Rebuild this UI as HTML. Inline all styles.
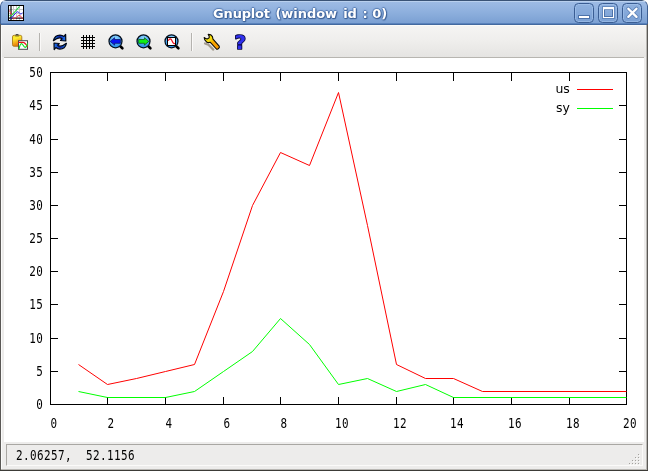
<!DOCTYPE html>
<html><head><meta charset="utf-8"><title>Gnuplot (window id : 0)</title>
<style>
html,body{margin:0;padding:0;background:#fff;}
body{width:648px;height:471px;position:relative;overflow:hidden;font-family:"DejaVu Sans","Liberation Sans",sans-serif;}
#win{position:absolute;left:0;top:0;width:648px;height:471px;box-sizing:border-box;background:#edeceb;border-radius:6px 6px 0 0;overflow:hidden;}
#frameL{position:absolute;left:0;top:24px;width:1px;height:447px;background:#5a5855;}
#frameL2{position:absolute;left:1px;top:25px;width:1px;height:444px;background:#fbfbfa;}
#frameR{position:absolute;left:647px;top:24px;width:1px;height:447px;background:#5a5855;}
#frameR2{position:absolute;left:646px;top:25px;width:1px;height:445px;background:#b9b7b3;}
#frameB{position:absolute;left:0;top:470px;width:648px;height:1px;background:#3c3b37;}
#frameB2{position:absolute;left:1px;top:469px;width:646px;height:1px;background:#b9b7b3;}
#title{position:absolute;left:0;top:0;width:648px;height:25px;box-sizing:border-box;border:1px solid #3d5f92;border-top-color:#3a5376;border-bottom:1px solid #43699f;border-radius:6px 6px 0 0;background:linear-gradient(#9fbce5 0%,#8dafdd 50%,#7ba0d3 95.600%,#5982bc 95.700%,#5982bc 100%);}
#title .hl{position:absolute;left:1px;right:1px;top:0;height:1px;background:#b9d0ee;border-radius:5px 5px 0 0;}
#ttext{position:absolute;left:0;top:4.500px;width:599px;height:16px;color:#fff;font-weight:bold;font-size:13px;letter-spacing:-0.040px;line-height:16px;text-shadow:0 1px 1px #3f6398,1px 1px 1px #3f6398,1px 0 1px #4f74aa,-1px 0 1px #5a7fb5,0 -1px 1px #5a7fb5;white-space:pre;will-change:transform;}
#ttext span{position:absolute;top:0;}
.wb{position:absolute;top:2px;width:20px;height:20px;box-sizing:border-box;border:1px solid #3a5d93;border-radius:4.500px;background:linear-gradient(#8fb1df,#7aa0d4);box-shadow:inset 0 0 0 1px rgba(170,200,238,0.550);}
.wb svg{position:absolute;left:-1px;top:-1px;}
#toolbar{position:absolute;left:2px;top:25px;width:644px;height:32px;background:linear-gradient(#fbfbfa 0,#fbfbfa 1px,#f5f4f3 1px,#efeeec 50%,#e5e4e2 100%);}
#tbline{position:absolute;left:4px;top:57px;width:640px;height:1px;background:#b7b5b0;}
.sep{position:absolute;top:8px;width:1px;height:18px;background:#b5b3af;box-shadow:1px 0 0 #faf9f8;}
.ic{position:absolute;top:9px;width:16px;height:16px;overflow:visible;}
#plotbg{position:absolute;left:4px;top:58px;width:640px;height:384px;background:#fff;}
.plot{position:absolute;left:4px;top:58px;will-change:transform;}
#status{position:absolute;left:6px;top:444px;width:637px;height:22px;box-sizing:border-box;border:1px solid;border-color:#a9a7a3 #fbfaf9 #fbfaf9 #a9a7a3;}
#stext{position:absolute;left:16.400px;top:448px;font-family:"DejaVu Sans Mono","Liberation Mono",monospace;font-size:13.700px;letter-spacing:0.500px;line-height:14px;color:#000;white-space:pre;transform:scaleX(0.800);transform-origin:0 0;}
#grip{position:absolute;left:626px;top:451px;}
</style></head><body>
<div id="win">
<div id="toolbar">
<svg class="ic" style="left:10px" viewBox="0 0 16 16"><defs><linearGradient id="cb" x1="0" y1="0" x2="0.300" y2="1"><stop offset="0" stop-color="#f4e62a"/><stop offset="0.350" stop-color="#fdec30"/><stop offset="1" stop-color="#e87408"/></linearGradient></defs>
<rect x="0.500" y="1.300" width="9.300" height="11" rx="1.600" fill="url(#cb)" stroke="#a87a1c" stroke-width="0.900"/><rect x="3.600" y="0" width="3" height="1.600" rx="0.700" fill="#4a4a48"/><rect x="3" y="1.200" width="4.200" height="1.200" rx="0.400" fill="#8a7a30"/>
<rect x="6.500" y="6.700" width="9" height="8.600" fill="#fff" stroke="#4a4a4a" stroke-width="1"/><path d="M6.500 8.300H11C13 8.300 14.200 10.500 15.600 12.800" fill="none" stroke="#f0101a" stroke-width="1.300"/><path d="M7 14.900C7.600 12 8 10.200 9.200 9.700S11.200 12 12.600 13.100 15 11.500 15.600 9.300" fill="none" stroke="#18e028" stroke-width="1.200"/></svg>
<div class="sep" style="left:37px"></div>
<svg class="ic" style="left:49px" viewBox="0 0 16 16"><defs><linearGradient id="rf" x1="0" y1="0" x2="1" y2="0"><stop offset="0" stop-color="#1c8cf0"/><stop offset="0.500" stop-color="#0a1fa8"/><stop offset="1" stop-color="#1f7df2"/></linearGradient></defs>
<path d="M2.400 6.700C3.200 3 6 1 9 1C10.800 1 12 1.600 13 2.400L14.600 .400 14.800 7 9.500 6.500 11 4.800C10.400 4.200 9.600 3.800 8.600 3.800C6.500 3.800 4.500 5 2.400 6.700Z" fill="url(#rf)" stroke="#020818" stroke-width="1.250" stroke-linejoin="round"/>
<g transform="rotate(180 8.900 8)"><path d="M2.400 6.700C3.200 3 6 1 9 1C10.800 1 12 1.600 13 2.400L14.600 .400 14.800 7 9.500 6.500 11 4.800C10.400 4.200 9.600 3.800 8.600 3.800C6.500 3.800 4.500 5 2.400 6.700Z" fill="url(#rf)" stroke="#020818" stroke-width="1.250" stroke-linejoin="round"/></g></svg>
<svg class="ic" style="left:78px" viewBox="0 0 16 16" shape-rendering="crispEdges"><path d="M3.500 1v14M6.500 1v14M9.500 1v14M12.500 1v14M1 3.500h14M1 6.500h14M1 9.500h14M1 12.500h14" stroke="#000" stroke-width="1.300" fill="none"/></svg>
<svg class="ic" style="left:106px" viewBox="0 0 16 16"><defs><radialGradient id="zg" cx="0.5" cy="0.25" r="0.8"><stop offset="0" stop-color="#8fd4ff"/><stop offset="1" stop-color="#1a86e6"/></radialGradient></defs>
<path d="M12.300 12.300L14.400 14.300" stroke="#000" stroke-width="2.600" stroke-linecap="round"/><circle cx="7.500" cy="7.300" r="6.500" fill="url(#zg)" stroke="#06101e" stroke-width="1.250"/><path d="M2.200 7.400L6.600 3.700V5.500H12.400V9.300H6.600V11.100Z" fill="#0a14f0" stroke="#061060" stroke-width="0.700"/></svg>
<svg class="ic" style="left:134px" viewBox="0 0 16 16"><path d="M12.300 12.300L14.400 14.300" stroke="#000" stroke-width="2.600" stroke-linecap="round"/><circle cx="7.500" cy="7.300" r="6.500" fill="url(#zg)" stroke="#06101e" stroke-width="1.250"/><path d="M12.800 7.400L8.400 3.700V5.500H2.600V9.300H8.400V11.100Z" fill="#10ee18" stroke="#06500a" stroke-width="0.700"/></svg>
<svg class="ic" style="left:162px" viewBox="0 0 16 16"><path d="M12.300 12.300L14.400 14.300" stroke="#000" stroke-width="2.600" stroke-linecap="round"/><circle cx="7.500" cy="7.300" r="6.500" fill="url(#zg)" stroke="#06101e" stroke-width="1.250"/><rect x="3.500" y="3.500" width="8" height="8" fill="#fff" stroke="#000" stroke-width="1"/><path d="M4.300 6.800c1-2.600 2.800-2.600 3.700 0s1.700 3 3 3" fill="none" stroke="#f01020" stroke-width="1.100"/></svg>
<div class="sep" style="left:189px"></div>
<svg class="ic" style="left:201px" viewBox="0 0 16 16"><defs><linearGradient id="wr" gradientUnits="userSpaceOnUse" x1="2" y1="3" x2="15" y2="14"><stop offset="0" stop-color="#f0f20e"/><stop offset="0.380" stop-color="#f7d408"/><stop offset="0.550" stop-color="#f9a800"/><stop offset="1" stop-color="#f89600"/></linearGradient><filter id="bl" x="-50%" y="-50%" width="200%" height="200%"><feGaussianBlur stdDeviation="0.700"/></filter></defs>
<path d="M2 9.400L5.400 10.800 10.300 15.600" stroke="#857a68" stroke-width="2.200" fill="none" opacity="0.700" stroke-linecap="round" filter="url(#bl)"/>
<path d="M5.200 .400L8 .900C9.200 1.600 9.900 2.800 10 5.200L16.200 12.200C17 13.600 14.900 15.900 13.400 15L7.100 8.200C5.800 8.800 4.800 8.700 4 8.300L1.800 5.800 1.200 3.600 2.600 4.400C3.400 4.900 4.200 4.900 4.700 4.700C5.600 4.400 6.100 4 6.200 3.600C6.300 2.800 6.200 2.200 5.900 1.600Z" fill="url(#wr)" stroke="#0c0a04" stroke-width="1.100" stroke-linejoin="round"/></svg>
<svg class="ic" style="left:229px;will-change:transform" viewBox="0 0 16 16"><text x="9.200" y="15.200" text-anchor="middle" font-family="'DejaVu Sans','Liberation Sans',sans-serif" font-weight="bold" font-size="20" fill="#3030ee" stroke="#06063c" stroke-width="1.700" stroke-linejoin="round" paint-order="stroke">?</text></svg>
</div>
<div id="tbline"></div>
<div id="plotbg"></div>
<svg class="plot" width="636" height="384" viewBox="4 58 636 384">
<g fill="none" stroke="#000" stroke-width="1" shape-rendering="crispEdges"><rect x="50.5" y="72.5" width="576.0" height="332.0"/><path d="M107.5 404.5v-8M107.5 72.5v8M165.5 404.5v-8M165.5 72.5v8M223.5 404.5v-8M223.5 72.5v8M280.5 404.5v-8M280.5 72.5v8M338.5 404.5v-8M338.5 72.5v8M396.5 404.5v-8M396.5 72.5v8M453.5 404.5v-8M453.5 72.5v8M511.5 404.5v-8M511.5 72.5v8M569.5 404.5v-8M569.5 72.5v8M50.5 371.5h7M626.5 371.5h-8M50.5 338.5h7M626.5 338.5h-8M50.5 304.5h7M626.5 304.5h-8M50.5 271.5h7M626.5 271.5h-8M50.5 238.5h7M626.5 238.5h-8M50.5 205.5h7M626.5 205.5h-8M50.5 172.5h7M626.5 172.5h-8M50.5 139.5h7M626.5 139.5h-8M50.5 105.5h7M626.5 105.5h-8"/></g>
<g font-family="'DejaVu Sans Mono','Liberation Mono',monospace" font-size="13.2" letter-spacing="0.5" fill="#000"><text transform="translate(54.0,428) scale(0.829,1)" text-anchor="middle">0</text><text transform="translate(111.0,428) scale(0.829,1)" text-anchor="middle">2</text><text transform="translate(169.0,428) scale(0.829,1)" text-anchor="middle">4</text><text transform="translate(227.0,428) scale(0.829,1)" text-anchor="middle">6</text><text transform="translate(284.0,428) scale(0.829,1)" text-anchor="middle">8</text><text transform="translate(342.0,428) scale(0.829,1)" text-anchor="middle">10</text><text transform="translate(400.0,428) scale(0.829,1)" text-anchor="middle">12</text><text transform="translate(457.0,428) scale(0.829,1)" text-anchor="middle">14</text><text transform="translate(515.0,428) scale(0.829,1)" text-anchor="middle">16</text><text transform="translate(573.0,428) scale(0.829,1)" text-anchor="middle">18</text><text transform="translate(630.0,428) scale(0.829,1)" text-anchor="middle">20</text><text transform="translate(43.2,409.0) scale(0.829,1)" text-anchor="end">0</text><text transform="translate(43.2,376.0) scale(0.829,1)" text-anchor="end">5</text><text transform="translate(43.2,343.0) scale(0.829,1)" text-anchor="end">10</text><text transform="translate(43.2,309.0) scale(0.829,1)" text-anchor="end">15</text><text transform="translate(43.2,276.0) scale(0.829,1)" text-anchor="end">20</text><text transform="translate(43.2,243.0) scale(0.829,1)" text-anchor="end">25</text><text transform="translate(43.2,210.0) scale(0.829,1)" text-anchor="end">30</text><text transform="translate(43.2,177.0) scale(0.829,1)" text-anchor="end">35</text><text transform="translate(43.2,144.0) scale(0.829,1)" text-anchor="end">40</text><text transform="translate(43.2,110.0) scale(0.829,1)" text-anchor="end">45</text><text transform="translate(43.2,77.0) scale(0.829,1)" text-anchor="end">50</text></g>
<g font-family="'DejaVu Sans','Liberation Sans',sans-serif" font-size="12.5" fill="#000" text-anchor="end"><text transform="translate(569.8,93) scale(0.999,1)">us</text><text transform="translate(569.8,112) scale(0.999,1)">sy</text></g>
<g fill="none" stroke-width="1" stroke-linejoin="miter"><polyline stroke="#ff0000" points="78.5,364.5 107.5,384.5 136.5,378.5 165.5,371.5 194.5,364.5 223.5,291.5 252.5,205.5 280.5,152.5 309.5,165.5 338.5,92.5 367.5,225.5 396.5,364.5 425.5,378.5 453.5,378.5 482.5,391.5 626.5,391.5"/><polyline stroke="#00ff00" points="78.5,391.5 107.5,397.5 165.5,397.5 194.5,391.5 223.5,371.5 252.5,351.5 280.5,318.5 309.5,344.5 338.5,384.5 367.5,378.5 396.5,391.5 425.5,384.5 453.5,397.5 626.5,397.5"/>
<path stroke="#ff0000" d="M577 89.5H613"/><path stroke="#00ff00" d="M577 108.5H613"/></g>
</svg>
<div id="status"></div>
<div id="stext">2.06257,  52.1156</div>
<svg id="grip" width="16" height="16" viewBox="0 0 16 16" shape-rendering="crispEdges"><g fill="#fbfbfa"><rect x="13" y="13" width="1" height="1"/><rect x="13" y="10" width="1" height="1"/><rect x="13" y="7" width="1" height="1"/><rect x="13" y="4" width="1" height="1"/><rect x="10" y="13" width="1" height="1"/><rect x="10" y="10" width="1" height="1"/><rect x="10" y="7" width="1" height="1"/><rect x="7" y="13" width="1" height="1"/><rect x="7" y="10" width="1" height="1"/><rect x="4" y="13" width="1" height="1"/></g><g fill="#a3a19d"><rect x="12" y="12" width="1" height="1"/><rect x="12" y="9" width="1" height="1"/><rect x="12" y="6" width="1" height="1"/><rect x="12" y="3" width="1" height="1"/><rect x="9" y="12" width="1" height="1"/><rect x="9" y="9" width="1" height="1"/><rect x="9" y="6" width="1" height="1"/><rect x="6" y="12" width="1" height="1"/><rect x="6" y="9" width="1" height="1"/><rect x="3" y="12" width="1" height="1"/></g></svg>
<div id="title"><div class="hl"></div>
<svg style="position:absolute;left:7px;top:4px" width="16" height="16" viewBox="0 0 16 16"><rect x="0.500" y="0.500" width="15" height="15" fill="#fff" stroke="#000" stroke-width="1"/><path d="M5.500 1v14M8.500 1v14M11.500 1v14M1 4.500h14M1 8.500h14M1 12.500h14" stroke="#c8c8c8" stroke-width="1" fill="none"/><path d="M3 1v14" stroke="#000" stroke-width="1.200"/><path d="M1 13.200h14" stroke="#000" stroke-width="1"/><path d="M1.500 10.500L4 10 11.500 1.500" fill="none" stroke="#18d838" stroke-width="1.100"/><path d="M1.500 5.500L3.500 10" fill="none" stroke="#f04050" stroke-width="1"/><path d="M2.500 14L8.500 7.200C9.500 6.200 10.500 7 11.500 8.200S13.500 9 14.500 7.800" fill="none" stroke="#2828f0" stroke-width="1"/><path d="M4.500 12.800C6 14.200 7.500 13.600 8.800 12S11.800 9.800 12.800 11.200 14 13.600 14.500 14" fill="none" stroke="#f03040" stroke-width="1"/></svg>
<div id="ttext"><span style="left:212.1px;letter-spacing:-0.190px">Gnuplot </span><span style="left:274.4px">(window </span><span style="left:342.2px">id </span><span style="left:361.5px">: </span><span style="left:371.2px">0)</span></div>
<div class="wb" style="left:573px"><svg width="20" height="20" viewBox="0 0 20 20"><rect x="4.500" y="12.500" width="11" height="3" fill="#fff" stroke="#4d73aa" stroke-width="1"/></svg></div>
<div class="wb" style="left:597px"><svg width="20" height="20" viewBox="0 0 20 20"><rect x="4.500" y="3.500" width="12" height="12" fill="none" stroke="#4d73aa" stroke-width="1" opacity="0.600"/><rect x="6.500" y="6.500" width="8" height="7" fill="none" stroke="#4d73aa" stroke-width="1"/><rect x="5.500" y="4.500" width="10" height="10" fill="none" stroke="#fff" stroke-width="1"/><path d="M5 5.500h11" stroke="#fff" stroke-width="1.600"/></svg></div>
<div class="wb" style="left:621px"><svg width="20" height="20" viewBox="0 0 20 20"><path d="M6.300 5.700L14.500 13.900M14.500 5.700L6.300 13.900" stroke="#4d73aa" stroke-width="4" stroke-linecap="round" opacity="0.700"/><path d="M6.300 5.700L14.500 13.900M14.500 5.700L6.300 13.900" stroke="#fff" stroke-width="2.300" stroke-linecap="round"/></svg></div>
</div>
<div id="frameL"></div><div id="frameL2"></div><div id="frameR"></div><div id="frameR2"></div><div id="frameB2"></div><div id="frameB"></div>
</div>
</body></html>
